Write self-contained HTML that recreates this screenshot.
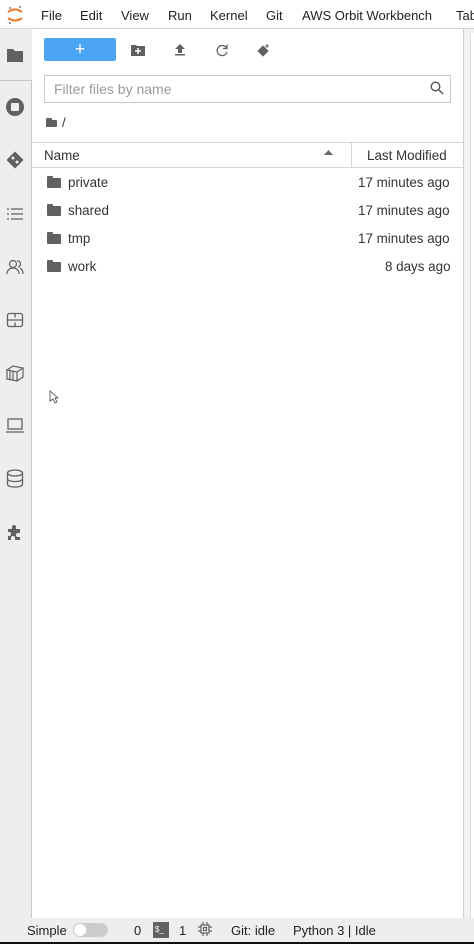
<!DOCTYPE html>
<html><head><style>
*{margin:0;padding:0;box-sizing:border-box}
body{width:474px;height:944px;overflow:hidden;font-family:"Liberation Sans",sans-serif;font-size:13px;color:#333;background:#fff;position:relative}
.abs{position:absolute}
.menu{top:0;left:0;width:474px;height:29px;border-bottom:1px solid #d6d6d6;background:#fff}
.menu span{position:absolute;top:8px;font-size:13px;color:#222}
.side{top:29px;left:0;width:32px;height:889px;background:#eee}
.status{top:918px;left:0;width:474px;height:26px;background:#eee;border-bottom:2px solid #111}
.status span{position:absolute;top:5px;font-size:13px;color:#222}
.folder{position:absolute;left:47px;width:14px;height:10px;background:#616161;border-radius:1px}
.folder:before{content:"";position:absolute;left:0;top:-2px;width:6px;height:3px;background:#616161;border-radius:1px 1px 0 0}
.row span{position:absolute;font-size:13.4px;color:#333}
</style></head><body>
<div class="abs menu">
<svg class="abs" style="left:6px;top:4px" width="18" height="22" viewBox="0 0 18 22"><path d="M2 8 Q9 3 16 8" stroke="#f37726" stroke-width="2" fill="none"/><path d="M2 14 Q9 19 16 14" stroke="#f37726" stroke-width="2" fill="none"/><circle cx="4" cy="4" r="1" fill="#777"/><circle cx="14" cy="3" r="1" fill="#777"/><circle cx="4" cy="19" r="1" fill="#777"/></svg>
<span style="left:41px">File</span><span style="left:80px">Edit</span><span style="left:121px">View</span><span style="left:168px">Run</span><span style="left:210px">Kernel</span><span style="left:266px">Git</span><span style="left:302px">AWS Orbit Workbench</span><span style="left:456px">Tab</span>
</div>
<div class="abs side">
<svg class="abs" style="left:6px;top:18px" width="18" height="16"><path d="M1 2h6l2 2h8v11H1z" fill="#616161"/></svg>
<div class="abs" style="left:0;top:51px;width:32px;height:838px;border-top:1px solid #c8c8c8;border-right:1px solid #c8c8c8"></div>
<svg class="abs" style="left:5px;top:68px" width="20" height="20"><circle cx="10" cy="10" r="9" fill="#616161"/><rect x="6" y="6" width="8" height="8" fill="#eee" rx="1"/></svg>
<svg class="abs" style="left:5px;top:121px" width="20" height="20"><rect x="4" y="4" width="12" height="12" transform="rotate(45 10 10)" fill="#616161"/><circle cx="8" cy="8" r="1.5" fill="#eee"/><circle cx="12" cy="12" r="1.5" fill="#eee"/></svg>
<svg class="abs" style="left:6px;top:177px" width="18" height="16" stroke="#616161" stroke-width="1.3"><path d="M5 3h12M5 8h12M5 13h12M1 3h2M1 8h2M1 13h2"/></svg>
<svg class="abs" style="left:6px;top:229px" width="18" height="18" fill="none" stroke="#616161" stroke-width="1.2"><circle cx="7" cy="6" r="3.5"/><path d="M1 16c0-4 3-6 6-6s6 2 6 6M11 3a3 3 0 0 1 1 6M14 10c2 1 3 3 3 6"/></svg>
<svg class="abs" style="left:6px;top:283px" width="18" height="16" fill="none" stroke="#616161" stroke-width="1.3"><rect x="1.5" y="1.5" width="15" height="13" rx="2"/><path d="M1.5 8h15M9 1.5v4M9 10.5v4"/></svg>
<svg class="abs" style="left:5px;top:334px" width="20" height="20" fill="none" stroke="#616161" stroke-width="1.2"><path d="M2 7l6-4 10 2-6 4zM2 7v9l10 2V9M18 5v9l-6 4M5 8v8M8 8.5v8.5"/></svg>
<svg class="abs" style="left:6px;top:389px" width="18" height="15" fill="none" stroke="#616161" stroke-width="1.3"><rect x="2" y="1" width="14" height="10"/><path d="M0 14h18"/></svg>
<svg class="abs" style="left:6px;top:440px" width="18" height="19" fill="none" stroke="#616161" stroke-width="1.3"><ellipse cx="9" cy="4" rx="7.5" ry="3"/><path d="M1.5 4v11c0 2 3 3 7.5 3s7.5-1 7.5-3V4M1.5 9.5c0 2 3 3 7.5 3s7.5-1 7.5-3"/></svg>
<svg class="abs" style="left:6px;top:494px" width="18" height="18"><path d="M2 6h4V4a2 2 0 0 1 4 0v2h4v4h-2a2 2 0 0 0 0 4h2v3H9v-2a2 2 0 0 0-4 0v2H2v-4h1a2 2 0 0 0 0-4H2z" fill="#616161"/></svg>
</div>
<div class="abs" style="left:463px;top:29px;width:1px;height:889px;background:#d0d0d0"></div>
<div class="abs" style="left:464px;top:29px;width:10px;height:889px;background:#f2f2f2"></div>
<div class="abs" style="left:470px;top:33px;width:4px;height:885px;background:#fff;border-left:1px solid #ddd"></div>
<div class="abs" style="left:44px;top:38px;width:72px;height:23px;background:#4ca5f2;border-radius:2px;color:#fff;text-align:center;font-size:18px;line-height:23px">+</div>
<svg class="abs" style="left:131px;top:44px" width="14" height="12"><path d="M0 1h5l1 1h8v10H0z" fill="#616161"/><path d="M7 4v6M4 7h6" stroke="#fff" stroke-width="1.5"/></svg>
<svg class="abs" style="left:174px;top:43px" width="12" height="14" fill="#616161"><path d="M6 1l5 5H8v4H4V6H1z"/><rect x="1" y="11" width="10" height="1.5"/></svg>
<svg class="abs" style="left:215px;top:43px" width="14" height="14" fill="none" stroke="#616161" stroke-width="1.3"><path d="M11.5 5A5 5 0 1 0 12 9"/><path d="M12 1.5v4H8" /></svg>
<svg class="abs" style="left:256px;top:43px" width="14" height="15"><rect x="3" y="4" width="8" height="8" transform="rotate(45 7 8)" fill="#616161"/><path d="M11 1v4M9 3h4" stroke="#616161" stroke-width="1"/></svg>
<div class="abs" style="left:44px;top:75px;width:407px;height:28px;border:1px solid #c8c8c8"></div>
<span class="abs" style="left:54px;top:81px;font-size:14px;color:#9a9a9a">Filter files by name</span>
<svg class="abs" style="left:430px;top:81px" width="14" height="14" fill="none" stroke="#555" stroke-width="1.4"><circle cx="5.5" cy="5.5" r="4.3"/><path d="M9 9l4 4"/></svg>
<div class="folder" style="top:120px;left:46px;width:11px;height:7px"></div>
<span class="abs" style="left:62px;top:115px;font-size:13px">/</span>
<div class="abs" style="left:32px;top:142px;width:431px;height:26px;border-top:1px solid #d6d6d6;border-bottom:1px solid #d6d6d6"></div>
<div class="abs" style="left:351px;top:142px;width:1px;height:26px;background:#d6d6d6"></div>
<span class="abs" style="left:44px;top:148px;font-size:13.4px">Name</span>
<svg class="abs" style="left:324px;top:150px" width="9" height="6"><path d="M0 5L4.5 0 9 5z" fill="#666"/></svg>
<span class="abs" style="left:367px;top:148px;font-size:13.4px">Last Modified</span>
<div class="row">
<div class="folder" style="top:178px"></div><span style="left:68px;top:175px">private</span><span style="left:358px;top:175px">17 minutes ago</span>
<div class="folder" style="top:206px"></div><span style="left:68px;top:203px">shared</span><span style="left:358px;top:203px">17 minutes ago</span>
<div class="folder" style="top:234px"></div><span style="left:68px;top:231px">tmp</span><span style="left:358px;top:231px">17 minutes ago</span>
<div class="folder" style="top:262px"></div><span style="left:68px;top:259px">work</span><span style="left:385px;top:259px">8 days ago</span>
</div>
<svg class="abs" style="left:49px;top:390px" width="10" height="14"><path d="M1 1v10l3-2 2 4 2-1-2-4h3z" fill="#fff" stroke="#444" stroke-width="0.8"/></svg>
<div class="abs status">
<span style="left:27px">Simple</span>
<div class="abs" style="left:73px;top:5px;width:35px;height:14px;border-radius:7px;background:#ccc"><div style="position:absolute;left:1px;top:1px;width:12px;height:12px;border-radius:6px;background:#fff"></div></div>
<span style="left:134px">0</span>
<div class="abs" style="left:153px;top:4px;width:16px;height:16px;background:#616161;color:#fff;font-size:8px;line-height:16px;padding-left:2px">$_</div>
<span style="left:179px">1</span>
<svg class="abs" style="left:198px;top:4px" width="14" height="14" fill="none" stroke="#616161" stroke-width="1.2"><rect x="3" y="3" width="8" height="8"/><rect x="5.5" y="5.5" width="3" height="3"/><path d="M5 0v3M9 0v3M5 11v3M9 11v3M0 5h3M0 9h3M11 5h3M11 9h3"/></svg>
<span style="left:231px">Git: idle</span>
<span style="left:293px">Python 3 | Idle</span>
</div>
</body></html>
